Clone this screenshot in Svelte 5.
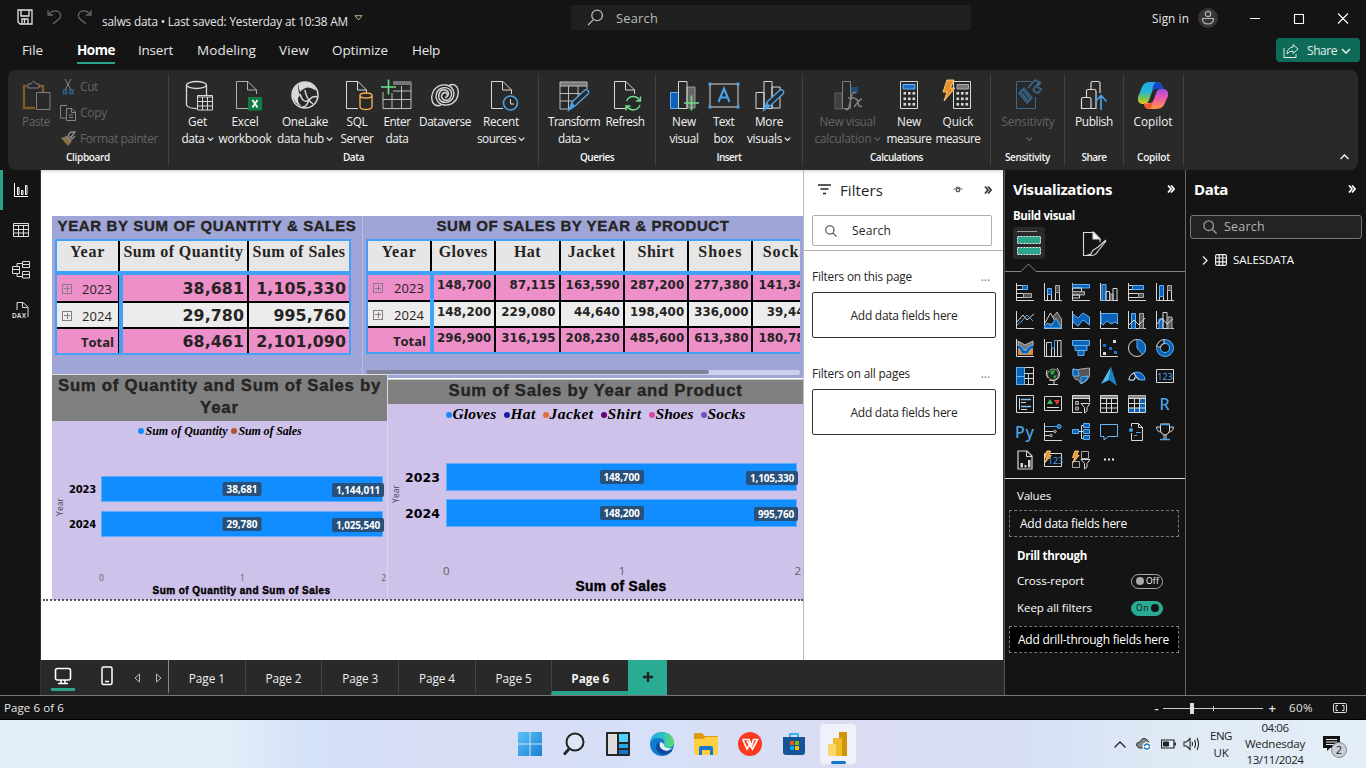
<script>
  function fit(node, w) {
    const n = node.textContent.length;
    const cur = node.getBoundingClientRect().width;
    if (w && n) node.style.letterSpacing = (w - cur) / n + 'px';
  }

  const W = '#d8d8d8', B = '#1a6fc4', L = '#4aa3e8', GR = '#6fe08a';
  const doc = (c = W) => `<path d="M16 28.500H4.500V1.500H16L24.500 10V14M15.500 1.500V10H24.500" stroke="${c}"/>`;
  const calc = (x) => `<path d="M${x} 1.500h17v27h-17z" stroke="${W}"/>` +
    [12, 17.500, 23].map((y) => [3, 7.500, 12].map((d) => `<path d="M${x + d} ${y}h2.600v2.600h-2.600z" fill="${W}"/>`).join('')).join('');
  const pencil = `<path d="M12 28L14 22L27 10Q29 9 30.500 11Q31 13 30 14L17 26L11 30Z" fill="#292929" stroke="${L}" stroke-width="1.400"/><path d="M14 22L17 26L10 31Z" fill="${L}"/>`;
  const bolt = (s = 1) => `<path d="M${5 * s} 0H${12 * s}L${8.500 * s} ${8 * s}H${13 * s}L${2 * s} ${21 * s}L${5 * s} ${12 * s}H${1 * s}Z" fill="#e8912d" stroke="#ffd27a" stroke-width=".9"/>`;
  const move = (x, s) => `<g transform="translate(${x} 0)">${s}</g>`;

  const big = {
    paste: `<g opacity=".5"><path d="M7 6H4V28H15M19 6H23V12" stroke="#d08a2c" stroke-width="2.400"/><path d="M8 8V4H11Q13.500 -1 16 4H19V8Z" stroke="${W}"/><path d="M16.500 12.500H30V29.500H16.500Z" stroke="${W}"/></g>`,
    get: move(1.500, `<ellipse cx="13" cy="5" rx="10" ry="3.500" stroke="${W}" stroke-width="1.300"/><path d="M3 5V25Q5 28.500 13 28.500M23 5V15" stroke="${W}" stroke-width="1.300"/><path d="M14 15.500h15v14.500h-15zM14 17h15M14 21.500h15M14 26h15M19 17v13M24 17v13" stroke="${W}" fill="#292929"/>`),
    excel: move(3, `${doc('#b0b0b0')}<path d="M16 17h14v13.500H16z" fill="#107c41"/><path d="M20.500 20L25.500 27.500M25.500 20L20.500 27.500" stroke="#fff" stroke-width="1.800"/>`),
    onelake: `<circle cx="16" cy="15" r="13" stroke="${W}" stroke-width="1.500"/><path d="M10 4Q3 8 3 16Q5 23 13 27Q6 20 11 15Q8 9 10 4Z" fill="${W}"/><path d="M10 4Q20 -2 27 9Q27 11 26 10Q18 4 11 12Q9 8 10 4Z" fill="${W}"/><path d="M11 14Q14 24 20 20Q24 15 29 17M16 10Q17 19 24 24M13 27Q17 28 20 20" stroke="${W}" stroke-width="1.500"/>`,
    sql: move(1, `${doc()}<path d="M18 15.500V27Q19 29.500 24 29.500T30 27V15.500" stroke="#f0a850" stroke-width="1.400" fill="#292929"/><ellipse cx="24" cy="15.500" rx="6" ry="2.500" stroke="#f0a850" stroke-width="1.400" fill="#292929"/>`),
    enter: `<path d="M2 12V28.500H30V2H12M2 19.500H30M11 13V28M20.500 6V28M12 11H30" stroke="#bdbdbd"/><path d="M12 2H30V5H12Z" fill="#777"/><path d="M0 7H15M7.500 -.5V14.500" stroke="${GR}" stroke-width="1.600"/>`,
    dataverse: `<g stroke="${W}" stroke-width="1.400"><path d="M20 5.500Q25 3 28 7Q31 13 27 20Q22 26 15 25Q8 24 7 17Q7 10 13 8Q19 6.500 22 11Q24 17 19 20Q14 21 12.500 17Q12.500 13 16 12.500Q19 13 18 16"/><path d="M12 25Q7 27 4 23Q1 17 5 10Q10 4 17 5Q24 6 25 13Q25 20 19 22Q13 23.500 10 19Q9 12 13 10Q18 9 19.500 13Q19.500 17 16 17.500"/></g>`,
    recent: move(2, `${doc()}<circle cx="23.500" cy="23" r="7" fill="#292929" stroke="${L}" stroke-width="1.600"/><path d="M23.500 19V24H27" stroke="${W}"/>`),
    transform: `<path d="M2 2h27v4H2z" fill="#777"/><path d="M29 9V2H2V29H12M2 6H29M2 13.500H25M2 21H15M10.500 6V29M20 6V18" stroke="#bdbdbd"/>${pencil}`,
    refresh: move(1, `${doc()}<path d="M16.500 21Q19 16 24 16.500Q28 17 30 21M30.500 16.500V21H26M30 25Q28 30 23 30Q19 29.500 16.500 26M16 30.500V26H20.500" stroke="${GR}" stroke-width="1.400"/>`),
    visual: `<path d="M2.500 12.500h8v16h-8z" fill="#0a63b8" stroke="#69b4f0"/><path d="M19 7h8v21h-8z" fill="#666" stroke="#999"/><path d="M10.500 1.500h8.500v27h-8.500z" stroke="${W}"/><path d="M16 23H31M23.500 15.500V30.500" stroke="${GR}" stroke-width="1.600"/>`,
    text: `<path d="M2 4H30V27H2Z" stroke="${W}"/><path d="M0.500 2.500h3v3h-3zM28.500 2.500h3v3h-3zM.5 25.500h3v3h-3zM28.500 25.500h3v3h-3z" fill="${L}"/><path d="M10.500 22L16 8.500L21.500 22M12.500 17.500H19.500" stroke="${L}" stroke-width="2"/>`,
    more: `<path d="M3 12.500h8v16h-8zM11 1.500h8v27h-8zM19 7h8v21h-8z" stroke="${W}"/>${pencil}`,
    fx: `<g opacity=".5"><path d="M3 13h7v16h-7z" fill="#555" stroke="#999"/><path d="M10.500 1.500h8v27h-8z" stroke="${W}"/><path d="M19 7h7v6h-7z" fill="#1a6fc4"/><path d="M24 13Q20 11 19.500 17L17 27Q16 31 13 29M16 18H23M23 19Q25 18 26 23Q27 28 30 26M30 19Q28 19 26 22L22 27" stroke="${W}" stroke-width="1.500"/></g>`,
    calc: `${calc(7.500)}<path d="M10 4.500h12v4.500h-12z" fill="#1a6fc4" stroke="#69b4f0"/>`,
    quick: `${calc(11.500)}<path d="M15 4.500h11.500v4.500H15z" fill="#777" stroke="#aaa"/>${bolt(1)}`,
    sens: `<g opacity=".5"><path d="M20 1.500H4.500V28.500H23.500V17" stroke="${L}"/><path d="M7 13L12 8L20 18L15 23ZM9 12L16 21M11 10L18 19" stroke="${L}" stroke-width="1.500"/><path d="M16 8L23 0L27 2L21 10M21 10Q26 16 29 9L25 7M26 6L29 2" stroke="${L}" stroke-width="1.800"/></g>`,
    publish: `<path d="M3.500 28.500V19Q3.500 17.500 5 17.500H11Q13 17.500 13 19V28.500ZM8.500 17V11Q8.500 9.500 10 9.500H16Q18 9.500 18 11V28.500H13M13 9V3Q13 1.500 15 1.500H20Q22 1.500 22 3V13" stroke="${W}" stroke-width="1.200"/><path d="M23 30V15.500M17.500 21.500L23 15.500L28.500 21.500" stroke="${L}" stroke-width="1.600"/>`,
    copilot: `<defs><linearGradient id="ca" x2="0" y2="1"><stop stop-color="#2aa7ee"/><stop offset=".45" stop-color="#27b6d6"/><stop offset=".75" stop-color="#7cc452"/><stop offset="1" stop-color="#f2c40c"/></linearGradient><linearGradient id="cb" x2="0" y2="1"><stop stop-color="#a34be6"/><stop offset=".5" stop-color="#ef5aa5"/><stop offset="1" stop-color="#ff9a3d"/></linearGradient></defs><path d="M13 2H21Q25 3 26 9H18Q16 9 15 12L12 20Q11 24 7 24H5Q0 23 1 17L5 7Q7 2 13 2Z" fill="url(#ca)"/><path d="M19 2H21Q25 3 26 9H17L15 12Q16 3 19 2Z" fill="#1747c9"/><path d="M18 29H11Q7 28 7 23H13Q16 23 17 19L20 11Q21 9 25 9H27Q32 10 31 16L27 25Q25 29 18 29Z" fill="url(#cb)"/><path d="M7 24H12Q15 24 16 20Q15 29 12 29Q8 29 7 24Z" fill="#f0592b"/>`
  };

  const groups = [
    { w: 370, label: 'Data', lw: 21, pad: 8, items: [
      { i: 'get', w: 41, l: [['Get', 19], ['data', 23, 1]] }, { i: 'excel', w: 54, l: [['Excel', 27], ['workbook', 53]] },
      { i: 'onelake', w: 66, l: [['OneLake', 46], ['data hub', 47, 1]] }, { i: 'sql', w: 38, l: [['SQL', 21], ['Server', 33]] },
      { i: 'enter', w: 42, l: [['Enter', 27], ['data', 23]] }, { i: 'dataverse', w: 54, l: [['Dataverse', 52]] },
      { i: 'recent', w: 58, l: [['Recent', 36], ['sources', 39, 1]] }] },
    { w: 117, label: 'Queries', lw: 34, pad: 7, items: [
      { i: 'transform', w: 56, l: [['Transform', 52], ['data', 23, 1]] }, { i: 'refresh', w: 46, l: [['Refresh', 39]] }] },
    { w: 147, label: 'Insert', lw: 25, pad: 8, items: [
      { i: 'visual', w: 40, l: [['New', 24], ['visual', 29]] }, { i: 'text', w: 39, l: [['Text', 21], ['box', 20]] },
      { i: 'more', w: 52, l: [['More', 28], ['visuals', 35, 1]] }] },
    { w: 188, label: 'Calculations', lw: 53, pad: 7, items: [
      { i: 'fx', w: 75, dim: 1, l: [['New visual', 56], ['calculation', 57, 1]] }, { i: 'calc', w: 48, l: [['New', 24], ['measure', 45]] },
      { i: 'quick', w: 50, l: [['Quick', 31], ['measure', 45]] }] },
    { w: 74, label: 'Sensitivity', lw: 45, pad: 7, items: [{ i: 'sens', w: 60, dim: 1, l: [['Sensitivity', 53], ['', 0, 1]] }] },
    { w: 59, label: 'Share', lw: 25, pad: 6, items: [{ i: 'publish', w: 46, l: [['Publish', 38]] }] },
    { w: 60, label: 'Copilot', lw: 33, pad: 6, items: [{ i: 'copilot', w: 46, l: [['Copilot', 39]] }] }
  ];

  const tabs = [['File', 21, 34], ['Home', 38, 23], ['Insert', 35, 24], ['Modeling', 59, 23], ['View', 30, 23], ['Optimize', 56, 24], ['Help', 28, 0]];

  const ax = `<path d="M.5 0V17.500H18" stroke="${W}"/>`;
  const F = `fill="#0a63b8" stroke="#5fb0f0"`, FG = `fill="#555" stroke="#aaa"`, N = `stroke="${W}"`;
  const sm = [
    ax + `<path d="M.5 2.500h6v4h-6zM.5 10.500h8v4h-8z" ${N}/><path d="M6.500 2.500h5v4h-5z" ${F}/><path d="M7.500 10.500h8v4h-8z" ${FG}/>`,
    ax + `<path d="M3.500 11.500h4v6h-4zM11.500 9.500h4v8h-4z" ${N}/><path d="M3.500 5.500h4v6h-4z" ${F}/><path d="M11.500 2.500h4v7h-4z" ${FG}/>`,
    ax + `<path d="M.5 1.500h17v3.500h-17z" ${F}/><path d="M.5 5h9v3.500h-9z" ${N}/><path d="M.5 8.500h12v3.500h-12z" ${FG}/><path d="M.5 12h7v3h-7z" ${N}/>`,
    ax + `<path d="M2 1.500h4v16h-4z" ${F}/><path d="M6 8.500h3.500v9H6z" ${N}/><path d="M10 11h3v6.500h-3z" ${FG}/><path d="M13 5.500h4v12h-4z" ${N}/>`,
    ax + `<path d="M.5 2.500h5v4h-5zM.5 10.500h10v4h-10z" ${N}/><path d="M4.500 2.500h11v4h-11z" ${F}/><path d="M10.500 10.500h5v4h-5z" ${FG}/>`,
    ax + `<path d="M3.500 13.500h4v4h-4zM11.500 7.500h4v10h-4z" ${N}/><path d="M3.500 2.500h4v11h-4z" ${F}/><path d="M11.500 2.500h4v5h-4z" ${FG}/>`,
    ax + `<path d="M1 11L7 4L11 9L18 3" ${N}/><path d="M1 14L6 10L11 4L17 10" stroke="${L}"/>`,
    ax + `<path d="M4 12L13 1L17.500 8V17H4Z" ${FG}/><path d="M1 12L6.500 2L12 12" fill="#141414" ${N}/><path d="M.5 14L4 12L7 15L12 7L17.500 17H.5Z" ${F}/>`,
    ax + `<path d="M1 3L6 7L11 2L17.500 6V14L11 9L6 15L1 11Z" ${F}/>`,
    ax + `<path d="M1 2.500H17.500V13L15 11L11 13L7 10L3 14L1 12Z" ${F}/>`,
    ax + `<path d="M3.500 2.500h4v15h-4z" ${F}/><path d="M11.500 2.500h4v15h-4z" ${FG}/><path d="M1 14L6 9L11 14L17 7" ${N}/>`,
    ax + `<path d="M3 8h4v9.500H3z" ${F}/><path d="M7 1.500h4v16H7z" ${N}/><path d="M12 6h4v11.500h-4z" ${FG}/><path d="M1 13L6 7L11 13L17 8" ${N}/>`,
    ax + `<path d="M2 10H17V16H2Z" fill="#e9862a"/><path d="M2 2L9 6L17 2V7L11 11L7 11L2 7Z" fill="#777" stroke="#bbb"/><path d="M2 8Q5 8 7 13H11Q13 8 17 8" stroke="#64b1ee" stroke-width="4"/><path d="M2 8Q5 8 7 13H11Q13 8 17 8" stroke="#0a63b8" stroke-width="2.500"/>`,
    ax + `<path d="M2.500 3.500h5V17M2.500 3.500V17M10.500 8V17M13.500 1.500h3.500V17M13.500 2V17" ${N}/><path d="M7.500 3.500V9h3V1.500h3" stroke="${L}"/>`,
    `<path d="M.5 1.500h17v5h-17z" ${F}/><path d="M3 6.500h12v5H3z" ${F}/><path d="M6 11.500h6v5H6z" ${F}/>`,
    ax + `<path d="M3 5h3v3H3zM9 8h3v3H9zM14 12h3v3h-3z" fill="#1a76d2"/><path d="M13 1h3v3h-3zM3 13h3v3H3z" fill="${W}"/>`,
    `<circle cx="9" cy="9" r="8.500" ${N}/><path d="M9 .5V9L14.500 15.500A8.500 8.500 0 0 0 9 .5Z" ${F}/>`,
    `<circle cx="9" cy="9" r="6.500" stroke="#64b1ee" stroke-width="5"/><circle cx="9" cy="9" r="6.500" stroke="#0a63b8" stroke-width="3.200"/><path d="M2 9A7 7 0 0 1 8 2" stroke="#141414" stroke-width="4"/><path d="M.5 8A8.500 8.500 0 0 1 8 .5V4.500A5 5 0 0 0 4.500 8Z" ${N}/>`,
    `<path d="M.5 .5h17v17H.5z" ${N}/><path d="M.5 .5h8v17h-8zM.5 9.500h8" ${F}/><path d="M8.500 6.500H17.500M12.500 6.500V17.500M8.500 11.500H17.500" ${N}/>`,
    `<circle cx="9" cy="7.500" r="5.500" fill="#1c2a20" stroke="#9a9a9a"/><path d="M6 4L11 3L10 7L7 8ZM9 9L13 8L11 12Z" fill="#2aa14b"/><path d="M13 1Q17 5 15 10Q12 15 5 13M10 14V17M4 17.500H14M3 3Q1 8 4 11" ${N}/>`,
    `<path d="M1 2Q6 4 9 2L17.500 1V9Q15 15 9 17Q7 12 3 12Q0 8 1 2Z" ${FG}/><path d="M1 2L6 3L7 9H1ZM9 10L16 9Q14 15 9 16Z" ${F}/>`,
    `<path d="M11 -.5L1 17L9 13Z" fill="#57b8e8"/><path d="M11 -.5L17 19L9 13Z" fill="#1783c4"/>`,
    `<path d="M1 13A8 8 0 0 1 17 13H12Q9 8 6 13Z" ${F}/><path d="M1 13A8 8 0 0 1 6 6L8 9Q6 10 6 13ZM6 7L11 13" fill="#141414" ${N}/>`,
    `<path d="M.5 2.500h17v13H.5z" ${N}/><text x="9" y="12.500" font-size="9" text-anchor="middle" font-family="Noto Sans" fill="${L}">123</text>`,
    `<path d="M.5 .5h17v17H.5z" ${N}/><path d="M5 4.500h10M5 11.500h10" stroke="#7cc0f5" stroke-width="1.500"/><path d="M3.500 3V14.500M5 7.500h5M5 14.500h6" ${N}/>`,
    `<path d="M.5 1.500h17v14H.5z" ${N}/><path d="M3 9L6 4L9 9Z" fill="#3fba55"/><path d="M10 5H16L13 10Z" fill="#e03a3a"/><path d="M3 12.500h12" ${N}/>`,
    `<path d="M.5 .5h17v3H.5z" fill="#888"/><path d="M10 17.500H.5V.5H17.500V7M.5 3.500h17" ${N}/><path d="M3.500 6.500h3v3h-3zM3.500 12h3v3h-3z" ${FG}/><path d="M9 8.500H18L15 12.500V16L12.500 18V12.500Z" fill="#141414" ${N}/>`,
    `<path d="M.5 .5h17v3H.5z" fill="#888"/><path d="M.5 .5h17v17H.5zM.5 3.500h17M.5 8.500h17M.5 13h17M6.500 4V17M11.500 4V17" ${N}/>`,
    `<path d="M.5 .5h17v17H.5z" fill="#0a63b8" ${N}/><path d="M1 4h10.500v8.500H1z" fill="#141414"/><path d="M.5 .5h17v3H.5z" fill="#888"/><path d="M.5 3.500h17M.5 8.500h17M.5 13h17M6.500 4V17M11.500 4V17" ${N}/>`,
    `<text x="3.500" y="15" font-size="16" font-family="Noto Sans" font-weight="500" fill="${L}">R</text>`,
    `<text x="-1" y="15" font-size="16" textLength="19" font-family="Noto Sans" font-weight="500" fill="${L}">Py</text>`,
    `<path d="M.5 0V17.500H18M1 8.500h9M1 12.500h6" ${N}/><path d="M1 3.500h12" stroke="${L}"/><circle cx="15" cy="3.500" r="2" ${F}/><circle cx="11" cy="8.500" r="1.300" ${FG}/><circle cx="7" cy="12.500" r="1.300" ${FG}/>`,
    `<path d="M7 8.500H12M9.500 2.500V15.500M9.500 2.500h3M9.500 15.500h3" ${N}/><path d="M.5 6.500h6v4h-6zM11.500 .5h6v4h-6zM11.500 6.500h6v4h-6zM11.500 12.500h6v4h-6z" ${F}/>`,
    `<path d="M.5 1.500H17.500V13.500H8L4 17V13.500H.5Z" stroke="#6ab7f3"/>`,
    `<path d="M3.500 4V.5H10.500L14.500 4.500V17.500H3.500V10M10.500 .5V4.500H14.500" ${N}/><circle cx="3" cy="7" r="2" fill="${L}"/><path d="M8 9.500h5M6 12.500h3" stroke="${L}"/>`,
    `<path d="M4.500 1H13.500V8Q12 12 9 12Q6 12 4.500 8ZM4.500 4H.5Q1 9 5 9M13.500 4H17.500Q17 9 13 9M8 12V16M10 12V16" ${N}/><path d="M4 16.500H14M4 1.500H14" stroke="${L}" stroke-width="1.500"/>`,
    `<path d="M2 0H11L16 5V18H2Z" stroke="${W}" stroke-width="1.200"/><path d="M10.500 0V5.500H16" ${N}/><path d="M4.500 12h2.500v4.500H4.500zM8.500 14h2v2.500h-2zM12 9h2.500v7.500H12z" fill="${W}"/>`,
    `<path d="M.5 2.500h17v13H.5z" ${N}/><text x="11.500" y="13" font-size="9" text-anchor="middle" font-family="Noto Sans" fill="${L}">123</text>${bolt(0.550)}`,
    `<path d="M9.500 .5h7v7h-7zM.5 10.500h7v6H.5z" stroke="#aaa"/><path d="M9 8.500H18L15 12.500V16L12.500 18V12.500Z" fill="#141414" ${N}/>${bolt(0.550)}`,
    `<path d="M4 7.500h2v2H4zM8 7.500h2v2H8zM12 7.500h2v2h-2z" fill="#eee"/>`
  ];

  const t1 = [['2023', '38,681', '1,105,330'], ['2024', '29,780', '995,760'], ['Total', '68,461', '2,101,090']];
  const t2h = [['Gloves', 49], ['Hat', 27], ['Jacket', 48], ['Shirt', 37], ['Shoes', 44], ['Socks', 44]];
  const t2 = [
    ['2023', '148,700', '87,115', '163,590', '287,200', '277,380', '141,340'],
    ['2024', '148,200', '229,080', '44,640', '198,400', '336,000', '39,440'],
    ['Total', '296,900', '316,195', '208,230', '485,600', '613,380', '180,780']];
  const numW = (s) => (s.length - 1) * 8.300 + 4.500;
  const numW1 = (s) => s.replace(/,/g, '').length * 11.100 + (s.split(',').length - 1) * 6;
  const legend = [['Gloves', 44, '#118dff'], ['Hat', 25, '#12239e'], ['Jacket', 44, '#e66c37'], ['Shirt', 34, '#6b007b'], ['Shoes', 38, '#e044a7'], ['Socks', 38, '#744ec2']];
  const pages = [1, 2, 3, 4, 5, 6];
</script>

{#snippet t(text, w)}<span class="t" use:fit={w}>{text}</span>{/snippet}
{#snippet chev(s = 7)}<svg class="chev" width={s} height={s * 0.6} viewBox="0 0 10 6" fill="none" stroke="currentColor" stroke-width="1.6"><path d="M1 1L5 5L9 1" /></svg>{/snippet}
{#snippet dbl()}<svg width="8" height="8" viewBox="0 0 8 8" fill="none" stroke="currentColor" stroke-width="1.7"><path d="M1 .5L4 4L1 7.500M4 .5L7 4L4 7.500" /></svg>{/snippet}
{#snippet lens(s, c)}<svg width={s} height={s} viewBox="0 0 16 16" fill="none" stroke={c} stroke-width="1.2"><circle cx="9.500" cy="6" r="5" /><path d="M6 10L1 15" /></svg>{/snippet}
{#snippet lensL(s, c)}<svg width={s} height={s} viewBox="0 0 16 16" fill="none" stroke={c} stroke-width="1.5"><circle cx="6.500" cy="6.500" r="5.500" /><path d="M10.500 10.500L15.500 15.500" /></svg>{/snippet}

<div class="app">
  <header class="title">
    <svg class="save" width="16" height="16" viewBox="0 0 16 16" fill="none" stroke="#e4e4e4" stroke-width="1.3"><path d="M1 1H15V15H3L1 13ZM4 1V7H12V1M5 15V10H11V15M7.500 10V14" /></svg>
    <svg class="undo" width="15" height="16" viewBox="0 0 15 16" fill="none" stroke="#666" stroke-width="1.3"><path d="M1 1V6H6M1 6Q5 1 10 2Q15 4 13 9L6 15" /></svg>
    <svg class="redo" width="15" height="16" viewBox="0 0 15 16" fill="none" stroke="#666" stroke-width="1.3"><path d="M14 1V6H9M14 6Q10 1 5 2Q0 4 2 9L9 15" /></svg>
    <div class="fname">{@render t('salws data • Last saved: Yesterday at 10:38 AM', 246)}</div>
    <svg class="tri" width="9" height="6" viewBox="0 0 9 6" fill="none" stroke="#c9ad8e"><path d="M1 .7H8L4.500 5Z" /></svg>
    <div class="search">{@render lens(17, '#bbb')}{@render t('Search', 42)}</div>
    <div class="sign">{@render t('Sign in', 37)}</div>
    <svg class="user" width="20" height="20" viewBox="0 0 20 20" fill="none" stroke="#b5b5b5" stroke-width="1.2"><circle cx="10" cy="10" r="10" fill="#363636" stroke="none" /><circle cx="10" cy="6" r="2.700" /><path d="M4.500 10.500H15.500Q15.500 16 10 16T4.500 10.500Z" /></svg>
    <svg class="win" width="102" height="14" viewBox="0 0 102 14" fill="none" stroke="#fff" stroke-width="1.1"><path d="M0 7.500H10M44.500 3.500H53.500V12.500H44.500ZM88 2.500L98 12.500M98 2.500L88 12.500" /></svg>
  </header>

  <nav class="menu">
    {#each tabs as [n, w, g]}<div class="tab" class:on={n === 'Home'} style:margin-right="{g}px">{@render t(n, w)}</div>{/each}
    <div class="share"><svg width="16" height="16" viewBox="0 0 16 16" fill="none" stroke="#e0eeea"><path d="M1 5V14.500H13V11M10 1.500L15 6L10 10.500V8Q6 8 4 11Q4 5 10 4Z" /></svg>{@render t('Share', 30)}{@render chev(10)}</div>
  </nav>

  <section class="ribbon">
    <div class="group clip">
      <div class="items">
        <div class="item dim paste"><svg width="32" height="32" viewBox="0 0 32 32" fill="none">{@html big.paste}</svg><div class="ln">{@render t('Paste', 28)}</div></div>
        <div class="small">
          <div><svg width="16" height="16" viewBox="0 0 16 16" fill="none" stroke="#888"><path d="M5 0L11 11M11 0L5 11" /><path d="M3.500 11h3v3.500h-3zM10 11h3v3.500h-3z" stroke="#2f6290" stroke-width="1.500" /></svg>{@render t('Cut', 18)}</div>
          <div><svg width="16" height="16" viewBox="0 0 16 16" fill="none" stroke="#858585"><path d="M6 13H.5V.5H7M6.500 3.500H12L15.500 7V15.500H6.500ZM11.500 4V7.500H15M9 10h4M9 12.500h4" /></svg>{@render t('Copy', 27)}</div>
          <div><svg width="16" height="16" viewBox="0 0 16 16" fill="none"><path d="M1 7L7 5L12 10L8 15Z" fill="#8a7048" /><path d="M6 5L11 10M8 4L12 8L15 5M8 4L11 1H15L11 6" stroke="#8a8a8a" stroke-width="1.400" /></svg>{@render t('Format painter', 78)}</div>
        </div>
      </div>
      <div class="glabel">{@render t('Clipboard', 44)}</div>
    </div>
    {#each groups as g}
      <div class="group" style:width="{g.w}px">
        <div class="items" style:padding-left="{g.pad}px">
          {#each g.items as it}
            <div class="item" class:dim={it.dim} style:width="{it.w}px">
              <svg width="32" height="32" viewBox="0 0 32 32" fill="none" overflow="visible">{@html big[it.i]}</svg>
              {#each it.l as [s, w, c]}<div class="ln">{@render t(s, w)}{#if c}{@render chev(7)}{/if}</div>{/each}
            </div>
          {/each}
        </div>
        <div class="glabel">{@render t(g.label, g.lw)}</div>
      </div>
    {/each}
    <svg class="fold" width="9" height="6" viewBox="0 0 9 6" fill="none" stroke="#eee" stroke-width="1.5"><path d="M.5 5L4.500 1L8.500 5" /></svg>
  </section>

  <div class="main">
    <aside class="rail">
      <div class="rc on"><svg width="16" height="16" viewBox="0 0 16 16" fill="none" stroke="#fff"><path d="M1.500 1V14.500H15M4.500 5.500h1.500v7h-1.500zM8.500 8.500h1.500v4h-1.500zM12.500 3.500h1.500v9h-1.500z" /></svg></div>
      <div class="rc"><svg width="16" height="16" viewBox="0 0 16 16" fill="none" stroke="#ddd"><path d="M.5 1.500h15v13H.5zM.5 3.500h15M.5 7.500h15M.5 11h15M5.500 3V14M10.500 3V14" /></svg></div>
      <div class="rc"><svg width="18" height="18" viewBox="0 0 18 18" fill="none" stroke="#ddd"><path d="M.5 5.500h7v7h-7zM10.500 .5h7v6h-7zM10.500 10.500h7v6.500h-7zM.5 8.500h7M10.500 3.500h7M10.500 13.500h7M5 5V2.500H10.500M5 13V15.500H10.500" /></svg></div>
      <div class="rc"><svg width="18" height="18" viewBox="0 0 18 18" fill="none" stroke="#ddd"><path d="M5 9V1.500H11L16 6V16M10.500 2V6.500H15" /><text x="0" y="16.500" font-size="6.500" textLength="14" font-family="Liberation Sans" font-weight="700" fill="#ddd" stroke="none">DAX</text></svg></div>
    </aside>

    <div class="center">
      <div class="work">
        <div class="canvas">
          <div class="vis v1">
            <div class="vt">{@render t('YEAR BY SUM OF QUANTITY & SALES', 299)}</div>
            <div class="tbl a">
              <div class="hd">{@render t('Year', 35)}</div><div class="hd">{@render t('Sum of Quantity', 120)}</div><div class="hd">{@render t('Sum of Sales', 93)}</div>
              {#each t1 as r, i}
                <div class="yr p{i}">{#if i < 2}<i class="plus"></i>{/if}{@render t(r[0], i < 2 ? 30 : 33)}</div>
                <div class="nm p{i}">{@render t(r[1], numW1(r[1]))}</div><div class="nm p{i}">{@render t(r[2], numW1(r[2]))}</div>
              {/each}
              <b class="f fh"></b><b class="f fy"></b><b class="f fb"></b>
            </div>
          </div>
          <div class="vis v2">
            <div class="vt">{@render t('SUM OF SALES BY YEAR & PRODUCT', 293)}</div>
            <div class="clipx"><div class="tbl b">
              <div class="hd">{@render t('Year', 35)}</div>{#each t2h as [h, w]}<div class="hd">{@render t(h, w)}</div>{/each}
              {#each t2 as r, i}
                <div class="yr p{i}">{#if i < 2}<i class="plus"></i>{/if}{@render t(r[0], i < 2 ? 30 : 33)}</div>
                {#each r.slice(1) as n}<div class="nm p{i}">{@render t(n, numW(n))}</div>{/each}
              {/each}
              <b class="f fh"></b><b class="f fy"></b><b class="f fb"></b>
            </div></div>
            <div class="scroll"><div></div></div>
          </div>
          <div class="vis v3">
            <div class="ct">{@render t('Sum of Quantity and Sum of Sales by', 323)}<br />{@render t('Year', 39)}</div>
            <div class="lg"><i style:background="#118dff"></i>{@render t('Sum of Quantity', 82)}<i class="sp" style:background="#b0532f"></i>{@render t('Sum of Sales', 63)}</div>
            <div class="plot">
              <div class="yt">Year</div>
              <div class="row"><span class="yl">{@render t('2023', 27)}</span><div class="bar"><em>{@render t('38,681', 31)}</em><em class="r">{@render t('1,144,011', 44)}</em></div></div>
              <div class="row"><span class="yl">{@render t('2024', 27)}</span><div class="bar"><em>{@render t('29,780', 31)}</em><em class="r">{@render t('1,025,540', 44)}</em></div></div>
            </div>
            <div class="axis"><span>0</span><span>1</span><span>2</span></div>
            <div class="at">{@render t('Sum of Quantity and Sum of Sales', 178)}</div>
          </div>
          <div class="vis v4">
            <div class="ct">{@render t('Sum of Sales by Year and Product', 294)}</div>
            <div class="lg">{#each legend as [n, w, c]}<i style:background={c}></i>{@render t(n, w)}{/each}</div>
            <div class="plot">
              <div class="yt">Year</div>
              <div class="row"><span class="yl">{@render t('2023', 35)}</span><div class="bar"><em>{@render t('148,700', 36)}</em><em class="r">{@render t('1,105,330', 44)}</em></div></div>
              <div class="row"><span class="yl">{@render t('2024', 35)}</span><div class="bar"><em>{@render t('148,200', 36)}</em><em class="r">{@render t('995,760', 36)}</em></div></div>
            </div>
            <div class="axis"><span>0</span><span>1</span><span>2</span></div>
            <div class="at">{@render t('Sum of Sales', 91)}</div>
          </div>
          <div class="dots"></div>
        </div>

        <div class="filters">
          <div class="fhead">
            <svg width="13" height="11" viewBox="0 0 13 11" stroke="#252423" stroke-width="1.3"><path d="M0 1H13M2.500 5H10.500M5 9.500H8" /></svg>
            {@render t('Filters', 43)}
            <svg class="eye" width="10" height="7" viewBox="0 0 10 7" fill="none" stroke="#555"><path d="M.5 4Q5 -2 9.500 4" /><circle cx="5" cy="4" r="1.700" stroke-width="1.300" /></svg>
            {@render dbl()}
          </div>
          <div class="fs">{@render lensL(12, '#444')}{@render t('Search', 39)}</div>
          <div class="fl">{@render t('Filters on this page', 100)}<span class="el">...</span></div>
          <div class="fbx">{@render t('Add data fields here', 107)}</div>
          <div class="fl two">{@render t('Filters on all pages', 98)}<span class="el">...</span></div>
          <div class="fbx">{@render t('Add data fields here', 107)}</div>
        </div>
      </div>

      <div class="pages">
        <div class="pi"><svg width="18" height="18" viewBox="0 0 18 18" fill="none" stroke="#fff" stroke-width="1.6"><rect x="1.500" y="1.500" width="15" height="11.500" rx="2" /><path d="M7 13V16M11 13V16M4 16.500H14" /></svg></div>
        <svg class="ph" width="12" height="20" viewBox="0 0 12 20" fill="none" stroke="#fff" stroke-width="1.5"><rect x="1" y="1" width="10" height="17.500" rx="1.500" /><path d="M4 15.500h4" /></svg>
        <svg class="ar" width="28" height="10" viewBox="0 0 28 10" fill="none" stroke="#bbb"><path d="M5.500 1V9L1 5ZM22.500 1V9L27 5Z" /></svg>
        {#each pages as p}<div class="pg" class:on={p === 6}>{@render t('Page ' + p, p === 6 ? 38 : 36)}</div>{/each}
        <div class="add"><svg width="10" height="10" viewBox="0 0 10 10" stroke="#222" stroke-width="2.4"><path d="M5 0V10M0 5H10" /></svg></div>
      </div>
    </div>

    <div class="viz">
      <div class="phd">{@render t('Visualizations', 99)}{@render dbl()}</div>
      <div class="bv">{@render t('Build visual', 62)}</div>
      <div class="modes">
        <div class="m1"><svg width="24" height="26" viewBox="0 0 24 26"><path d="M0 .5H20" stroke="#999" /><g fill="#2aa58c" stroke="#eee" stroke-dasharray="2 1"><path d="M.5 5.500h23v7H.5zM.5 16.500h23v7H.5z" /></g></svg></div>
        <svg class="m2" width="26" height="26" viewBox="0 0 26 26" fill="none" stroke="#d8d8d8" stroke-width="1.100"><path d="M8 24.500H2.500V1.500H13L19 8V11" /><path d="M12 1V8H19Z" fill="#fff" /><path d="M25 9L17 16L14 18Q11 19 10 23L7 24Q14 26 17 20L25 10" /></svg>
      </div>
      <svg class="notch" width="180" height="9" viewBox="0 0 180 9" fill="none" stroke="#858585"><path d="M0 8.500H16L23.500 1L31 8.500H180" /></svg>
      <div class="grid">{#each sm as s}<svg width="18" height="18" viewBox="0 0 18 18" fill="none" overflow="visible">{@html s}</svg>{/each}</div>
      <div class="val">{@render t('Values', 34)}</div>
      <div class="drop">{@render t('Add data fields here', 107)}</div>
      <div class="dt">{@render t('Drill through', 70)}</div>
      <div class="tg">{@render t('Cross-report', 67)}<span class="sw"><u></u>{@render t('Off', 13)}</span></div>
      <div class="tg k">{@render t('Keep all filters', 75)}<span class="sw on">{@render t('On', 13)}<u></u></span></div>
      <div class="drop dk">{@render t('Add drill-through fields here', 151)}</div>
    </div>

    <div class="data">
      <div class="phd">{@render t('Data', 34)}{@render dbl()}</div>
      <div class="ds">{@render lensL(14, '#999')}{@render t('Search', 41)}</div>
      <div class="sd"><svg width="6" height="9" viewBox="0 0 6 9" fill="none" stroke="#eee" stroke-width="1.3"><path d="M1 .5L5 4.500L1 8.500" /></svg><svg width="12" height="12" viewBox="0 0 12 12" fill="none" stroke="#eee" stroke-width="1.200"><rect x=".6" y=".6" width="10.800" height="10.800" rx="1.500" /><path d="M4.200 1V11M7.800 1V11M1 4H11M1 7.800H11" /></svg>{@render t('SALESDATA', 61)}</div>
    </div>
  </div>

  <div class="status">
    {@render t('Page 6 of 6', 60)}
    <div class="zoom"><b>-</b><div class="sl"><i></i><s></s></div><b>+</b>{@render t('60%', 24)}<svg width="14" height="10" viewBox="0 0 14 10" fill="none" stroke="#ddd"><rect x=".5" y=".5" width="13" height="9" rx="1" /><path d="M5 2.500H3V7.500H5M9 2.500H11V7.500H9" /></svg></div>
  </div>

  <footer class="task">
    <div class="apps">
      <svg width="24" height="24" viewBox="0 0 24 24"><defs><linearGradient id="wg" x2="1" y2="1"><stop stop-color="#5cc3f5" /><stop offset="1" stop-color="#1a7fd6" /></linearGradient></defs><path d="M0 0H11.500V11.500H0ZM12.500 0H24V11.500H12.500ZM0 12.500H11.500V24H0ZM12.500 12.500H24V24H12.500Z" fill="url(#wg)" /></svg>
      <svg width="24" height="24" viewBox="0 0 24 24" fill="none" stroke="#222" stroke-width="2"><circle cx="13" cy="10" r="8.500" fill="#dfe5f7" /><path d="M7 17L2 22.500" stroke-width="2.800" /></svg>
      <svg width="24" height="24" viewBox="0 0 24 24"><rect width="24" height="24" rx="1" fill="#262626" /><path d="M2 2h9v20H2z" fill="#ddd" /><path d="M13 2h9v8h-9z" fill="#4fd1fa" /><path d="M13 12h9v4h-9z" fill="#29a6e6" /><path d="M13 18h9v4h-9z" fill="#1377cf" /></svg>
      <svg width="24" height="24" viewBox="0 0 24 24"><defs><linearGradient id="eg"><stop stop-color="#25a3e6" /><stop offset=".5" stop-color="#2cc0cd" /><stop offset="1" stop-color="#64df5e" /></linearGradient></defs><circle cx="12" cy="12" r="12" fill="#1378cf" /><path d="M0 12Q1 0 12 0Q23 1 24 10Q24 16 17 16Q13 16 14 13Q16 6 8 6Q2 6 0 12Z" fill="url(#eg)" /><path d="M9 10Q3 14 8 20Q13 25 21 20Q23 18 21 18Q10 20 9 10Z" fill="#0c499b" /><path d="M10 10Q8 18 17 19Q20 18 22 16Q16 17 14 14Q15 11 10 10Z" fill="#e5edfa" /></svg>
      <svg width="26" height="24" viewBox="0 0 26 24"><path d="M1 2Q1 1 2 1H9L12 4H24Q25 4 25 5V12H1Z" fill="#dd9a13" /><path d="M1 7H10L13 5H25V22Q25 23 24 23H2Q1 23 1 22Z" fill="#ffcf43" /><path d="M6 23V16Q6 14 8 14H18Q20 14 20 16V23H17V18H9V23Z" fill="#1679cf" /></svg>
      <svg width="24" height="24" viewBox="0 0 24 24"><circle cx="12" cy="12" r="12" fill="#fb3a20" /><path d="M4.500 7.500H11L13.500 14L15.500 7.500H19.500L14.500 17L9 9M5 8L9 17L12 12" stroke="#fff" stroke-width="1.700" fill="none" /></svg>
      <svg width="24" height="24" viewBox="0 0 24 24"><path d="M8 7V2H16V7" stroke="#31b9ee" stroke-width="2" fill="none" /><path d="M1 5H23V20Q23 23 20 23H4Q1 23 1 20Z" fill="#155596" /><path d="M8 9h4v4H8z" fill="#f35325" /><path d="M13 9h4v4h-4z" fill="#81bc06" /><path d="M8 14h4v4H8z" fill="#05a6f0" /><path d="M13 14h4v4h-4z" fill="#ffba08" /></svg>
      <div class="pbi"><svg width="20" height="24" viewBox="0 0 20 24"><path d="M11 0H18Q19 0 19 1V24H11Z" fill="#cf9209" /><path d="M5 6H13Q14 6 14 7V24H5Z" fill="#eebd2c" /><path d="M1 12H7Q8 12 8 13V24H2Q0 24 0 22V13Z" fill="#f8d768" /></svg></div>
    </div>
    <div class="tray">
      <svg width="12" height="7" viewBox="0 0 12 7" fill="none" stroke="#222" stroke-width="1.300"><path d="M.5 6.500L6 1L11.500 6.500" /></svg>
      <svg width="16" height="14" viewBox="0 0 16 14"><path d="M3 11Q-1 9 1 6Q3 5 4 5Q6 0 10 2Q13 4 13 6L9 11Z" fill="#888" stroke="#333" /><circle cx="11" cy="9.500" r="4.500" fill="#fff" /><path d="M8 9Q11 5 14 9M14 10Q11 14 8 10.500" stroke="#1a78c8" stroke-width="1.500" fill="none" /></svg>
      <svg width="15" height="10" viewBox="0 0 15 10" fill="none" stroke="#222"><path d="M.5 1h12.500v8H.5zM14.300 3.500v3" stroke-width="1.200" /><path d="M2.500 3h5v4h-5z" fill="#222" /></svg>
      <svg width="17" height="14" viewBox="0 0 17 14" fill="none" stroke="#222" stroke-width="1.100"><path d="M1 5H3.500L7 1.500V12.500L3.500 9H1ZM9 5Q10 7 9 9M11.500 3Q13.500 7 11.500 11M14 1Q17 7 14 13" /></svg>
      <div class="lang">{@render t('ENG', 22)}<br />{@render t('UK', 15)}</div>
      <div class="clock">{@render t('04:06', 27)}<br />{@render t('Wednesday', 60)}<br />{@render t('13/11/2024', 57)}</div>
      <div class="note"><svg width="17" height="15" viewBox="0 0 17 15"><path d="M0 0H17V12H7L4 15V12H0Z" fill="#111" /><path d="M3 3.500H14M3 6H14M3 8.500H11" stroke="#e5eaf5" stroke-width="1.100" /></svg><span>2</span></div>
    </div>
  </footer>
</div>

<style>
  :global(body) { margin: 0; overflow: hidden; }
  .app { width: 1366px; height: 768px; background: #141414; color: #e6e6e6; font: 12px/16px "Open Sans", "Noto Sans", sans-serif; display: flex; flex-direction: column; overflow: hidden; }
  .app :global(*) { box-sizing: border-box; }
  svg { flex: none; display: block; }
  .t { display: inline-block; white-space: pre; }
  .title { height: 35px; display: flex; align-items: center; padding-left: 17px; flex: none; }
  .save { margin-top: -1px; }
  .undo { margin-left: 14px; margin-top: -1px; }
  .redo { margin-left: 15px; margin-top: -1px; }
  .fname { margin: 6px 0 0 10px; width: 246px; font-size: 11.8px; display: flex; }
  .tri { margin-left: 6px; }
  .search { width: 400px; height: 25px; margin-left: 208px; background: #1f1f1f; display: flex; align-items: center; gap: 12px; padding-left: 16px; font-size: 12.8px; color: #bdbdbd; border-radius: 2px; }
  .sign { margin-left: 181px; width: 37px; display: flex; font-size: 11.8px; }
  .user { margin-left: 9px; }
  .win { margin-left: 32px; }
  .menu { height: 35px; flex: none; display: flex; padding-left: 22px; font-size: 13.5px; position: relative; }
  .tab { height: 29px; padding-top: 7px; display: flex; border-bottom: 2px solid transparent; }
  .tab.on { font-weight: 700; color: #fff; border-color: #2aa58c; }
  .share { margin: 3px 6px 0 auto; width: 84px; height: 24px; background: #0f6b58; border-radius: 4px; display: flex; align-items: center; gap: 8px; padding: 1px 0 0 7px; color: #e0eeea; font-size: 12px; }
  .share .chev { margin-left: -4px; }
  .ribbon { margin-left: 8px; width: 1350px; height: 100px; flex: none; background: #292929; border-radius: 8px; display: flex; padding: 4px 0; }
  .group { height: 92px; border-right: 1px solid #404040; display: flex; flex-direction: column; flex: none; }
  .clip { width: 161px; }
  .items { display: flex; height: 75px; padding-top: 6px; }
  .item { display: flex; flex-direction: column; align-items: center; font-size: 11.8px; color: #f2f2f2; flex: none; }
  .item > svg { margin-bottom: 1px; }
  .item.dim, .small { color: #646464; }
  .ln { height: 16.500px; display: flex; align-items: center; }
  .ln .chev { margin: 2px 0 0 2px; }
  .paste { width: 56px; }
  .small { display: flex; flex-direction: column; gap: 10px; margin: -1px 0 0 -4px; }
  .small div { display: flex; height: 16px; gap: 4px; align-items: center; }
  .glabel { text-align: center; font-size: 10px; font-weight: 600; color: #f5f5f5; line-height: 16px; }
  .fold { margin: 80px 9px 0 auto; }
  .main { height: 525px; display: flex; flex: none; }
  .rail { width: 41px; border-right: 1px solid #333; display: flex; flex-direction: column; flex: none; }
  .rc { height: 40px; border-left: 3px solid transparent; display: flex; align-items: center; justify-content: center; padding-right: 1px; }
  .rc.on { border-color: #2aa58c; }
  .center { width: 963px; display: flex; flex-direction: column; flex: none; }
  .work { height: 490px; display: flex; background: #fff; }
  .canvas { width: 762px; position: relative; overflow: hidden; background: linear-gradient(#ddd, #fff 4px); color: #252423; flex: none; }
  .vis { position: absolute; overflow: hidden; }
  .v1 { left: 11px; top: 46px; width: 311px; height: 158px; background: #a0a5d8; border-right: 1px solid #b9bce2; }
  .v2 { left: 322px; top: 46px; width: 440px; height: 162px; background: #a0a5d8; }
  .v3 { left: 11px; top: 204px; width: 336px; height: 226px; background: #cec2ea; border-right: 1px solid #ddd5f0; }
  .v4 { left: 347px; top: 209px; width: 415px; height: 221px; background: #cec2ea; }
  .vt { height: 23px; padding-top: 2px; text-align: center; font: 700 15px/16px "Liberation Sans", sans-serif; -webkit-text-stroke: .35px; }
  .tbl { position: relative; display: grid; row-gap: 2px; background: #000; }
  .a { margin-left: 5px; width: 292px; height: 115px; grid-template-columns: 61px 127px 100px; column-gap: 2px; grid-template-rows: 34px 26px 24px 25px; }
  .clipx { overflow: hidden; width: 434px; margin-left: 3px; height: 118px; }
  .b { margin-left: 2px; margin-top: 2px; width: 450px; height: 112px; grid-template-columns: 62px repeat(6, 62.300px); column-gap: 2px; grid-template-rows: 32px 25px 24px 25px; }
  .hd { background: #e6e6e6; font: 700 16px/21px "Liberation Serif", serif; text-align: center; }
  .a .hd { line-height: 25px; }
  .yr, .nm { background: #ed8fc9; display: flex; align-items: center; justify-content: flex-end; padding-right: 3px; }
  .yr { font-size: 13px; padding-right: 6px; padding-top: 1px; }
  .p1 { background: #ececec; }
  .yr.p2 { font-weight: 700; padding-right: 4px; }
  .nm { font: 700 15.800px/20px "DejaVu Sans", sans-serif; padding-top: 1px; }
  .b .nm { font-size: 11.800px; align-items: flex-start; line-height: 21px; padding-top: 0; }
  .plus { width: 10px; height: 10px; border: 1px solid #8a7a85; margin-right: auto; margin-left: 5px; background: linear-gradient(#8a7a85, #8a7a85) center/6px 1px no-repeat, linear-gradient(#8a7a85, #8a7a85) center/1px 6px no-repeat; }
  .f { position: absolute; border: 2px solid #41a1f7; }
  .fh { left: -2px; top: 0; right: -2px; height: 34px; }
  .fy { left: -2px; top: 34px; width: 66px; bottom: -1px; }
  .fb { left: 64px; top: 34px; right: -2px; bottom: -1px; }
  .b .fh { top: -2px; }
  .b .fy, .b .fb { top: 32px; }
  .scroll { margin: 13px 0 0 3px; width: 434px; height: 5px; background: #cdd0ee; border-radius: 3px; }
  .scroll div { width: 343px; height: 4px; background: #808299; border-radius: 3px; }
  .ct { background: #808080; text-align: center; font: 700 16.800px/22px "Liberation Sans", sans-serif; -webkit-text-stroke: .35px; }
  .v3 .ct { height: 47px; border-top: 1px solid #ddd; line-height: 21.500px; }
  .v4 .ct { height: 25px; border-top: 1px solid #ccc; line-height: 21px; }
  .lg { display: flex; align-items: center; justify-content: center; font: italic 700 12px/16px "Liberation Serif", serif; color: #000; }
  .lg i { width: 6px; height: 6px; border-radius: 50%; margin-right: 2px; }
  .v3 .lg { height: 19px; }
  .lg .sp { margin-left: 3px; }
  .v4 .lg { height: 20px; font-size: 15.500px; }
  .v4 .lg i { margin-right: 1px; margin-top: 2px; }
  .v4 .lg i:not(:first-child) { margin-left: 7px; }
  .plot { position: relative; display: flex; flex-direction: column; gap: 9px; }
  .v3 .plot { margin-top: 36px; gap: 9px; }
  .v4 .plot { margin-top: 39px; gap: 8px; }
  .yt { position: absolute; left: -7px; top: 24px; width: 30px; height: 14px; font-size: 8.500px; line-height: 14px; text-align: center; transform: rotate(-90deg); color: #444; }
  .row { height: 26px; display: flex; align-items: center; padding-left: 17px; color: #000; }
  .v4 .row { height: 28px; }
  .yl { width: 32px; font: 700 10px/14px "DejaVu Sans", sans-serif; padding-top: 1px; }
  .v4 .yl { width: 41px; font-size: 12.500px; }
  .bar { width: 282px; height: 100%; background: #118dff; border: 1px solid #5caef8; display: flex; align-items: center; position: relative; }
  .v4 .bar { width: 351px; }
  em { position: absolute; left: 50%; transform: translateX(-50%); background: #27507a; color: #fff; font: 700 10px/14px "Open Sans", sans-serif; padding: 0 4px; border-radius: 2px; height: 14px; }
  .r { left: auto; right: -2px; transform: none; top: 6px; }
  .v4 .r { top: 7px; }
  .axis { display: flex; justify-content: space-between; color: #605e5c; }
  .v3 .axis { margin: 34px 1px 0 47px; font-size: 8.500px; line-height: 14px; }
  .v4 .axis { margin: 36px 2px 0 55px; font-size: 11.500px; line-height: 16px; }
  .at { font: 700 10px/12px "Liberation Sans", sans-serif; text-align: center; color: #000; -webkit-text-stroke: .4px; }
  .v3 .at { padding-left: 44px; }
  .v4 .at { padding-left: 51px; font-size: 13.800px; line-height: 15px; }
  .dots { position: absolute; left: 2px; right: 0; top: 429px; border-top: 2px dotted #555; }
  .filters { width: 201px; border-left: 1px solid #bbb; border-right: 1px solid #333; background: linear-gradient(#ddd, #fff 4px); color: #252423; font-size: 12px; }
  .fhead { height: 40px; display: flex; align-items: center; padding: 0 11px 1px 14px; font-size: 15px; font-weight: 500; gap: 9px; color: #252423; }
  .fhead :global(svg) { color: #333; }
  .eye { margin-left: auto; margin-right: 12px; }
  .fs { margin: 5px 0 0 8px; width: 180px; height: 31px; border: 1px solid #b0aeac; border-radius: 2px; display: flex; align-items: center; padding-left: 12px; gap: 15px; }
  .fl { border-top: 1px solid #b5b0ac; margin-top: 4px; height: 42px; display: flex; justify-content: space-between; padding: 17px 13px 0 8px; font-size: 11.800px; }
  .fl.two { border: 0; margin-top: 0; height: 51px; padding-top: 27px; }
  .el { color: #777; line-height: 16px; }
  .fbx { margin-left: 8px; width: 184px; height: 46px; border: 1px solid #333; border-radius: 2px; display: flex; align-items: center; justify-content: center; padding-top: 2px; }
  .pages { height: 35px; background: #292929; display: flex; font-size: 11.800px; color: #f0f0f0; }
  .pi { width: 24px; margin-left: 10px; height: 31px; border-bottom: 3px solid #2aa58c; padding: 7px 3px 0; border-radius: 1px; }
  .ph { margin: 6px 0 0 26px; }
  .ar { margin: 13px 0 0 21px; }
  .pg { width: 76.700px; border-left: 1px solid #444; display: flex; justify-content: center; align-items: center; padding-top: 4px; border-bottom: 4px solid transparent; }
  .pg:nth-of-type(2) { margin-left: 6px; border-left-color: #888; }
  .pg.on { font-weight: 700; border-bottom-color: #2aa58c; }
  .add { width: 39px; background: #2aac94; display: flex; align-items: center; justify-content: center; padding-bottom: 2px; }
  .viz { width: 181px; border-left: 1px solid #555; display: flex; flex-direction: column; flex: none; font-size: 12px; color: #fff; }
  .data { width: 181px; border-left: 1px solid #666; flex: none; color: #fff; }
  .phd { height: 38px; display: flex; align-items: center; justify-content: space-between; padding: 0 10px 0 8px; font-size: 15px; font-weight: 700; flex: none; }
  .bv { height: 19px; line-height: 16px; padding-left: 8px; font-weight: 700; font-size: 11.500px; }
  .modes { display: flex; height: 36px; }
  .m1 { margin-left: 8px; width: 32px; height: 32px; background: #292929; border-radius: 3px; padding: 4px; }
  .m2 { margin: 4px 0 0 36px; }
  .grid { display: grid; grid-template-columns: repeat(6, 18px); align-content: start; gap: 10px; padding: 11px 0 0 11px; height: 207px; border-bottom: 1px solid #ddd; flex: none; }
  .val { padding: 9px 0 0 12px; height: 31px; font-size: 11.500px; }
  .drop { margin-left: 4px; width: 170px; height: 27px; border: 1px dashed #777; display: flex; align-items: center; padding: 1px 0 0 10px; flex: none; }
  .drop.dk { background: #000; padding-left: 8px; margin-top: 10px; }
  .dt { padding: 11px 0 0 12px; font-weight: 700; height: 36px; font-size: 11.500px; }
  .tg { display: flex; justify-content: space-between; align-items: center; padding: 0 22px 0 12px; height: 16px; font-size: 11.500px; }
  .k { margin-top: 11px; }
  .sw { width: 32px; height: 15px; border: 1px solid #aaa; border-radius: 8px; display: flex; align-items: center; justify-content: space-between; padding: 0 3px 0 4px; font-size: 8.500px; }
  .sw u { width: 8px; height: 8px; border-radius: 50%; background: #aaa; }
  .sw.on { background: #2aac94; border-color: #2aac94; color: #111; }
  .sw.on u { background: #111; }
  .ds { margin: 7px 0 0 4px; width: 172px; height: 24px; border: 1px solid #777; background: #232323; border-radius: 3px; display: flex; align-items: center; padding-left: 12px; gap: 7px; color: #b5b5b5; font-size: 12.500px; }
  .sd { display: flex; align-items: center; height: 16px; margin: 13px 0 0 16px; gap: 7px; font-size: 11.500px; }
  .sd svg + svg { margin-right: -1px; }
  .status { height: 25px; flex: none; border-top: 1px solid #777; border-bottom: 1px solid #000; display: flex; align-items: center; padding: 1px 18px 0 4px; font-size: 11.500px; justify-content: space-between; }
  .zoom { display: flex; align-items: center; }
  .zoom b { font-size: 13px; font-weight: 600; }
  .sl { width: 100px; height: 1px; background: #ccc; margin: 0 6px 0 4px; position: relative; }
  .sl i { position: absolute; left: 27px; top: -5px; width: 4px; height: 11px; background: #ddd; }
  .sl s { position: absolute; left: 50px; top: -2px; width: 1px; height: 5px; background: #ccc; }
  .zoom > .t { margin-left: 13px; }
  .zoom svg { margin: 0 1px 0 20px; }
  .task { height: 48px; flex: none; background: linear-gradient(90deg, #e2eef6 0, #e2edf7 17%, #d3e1f9 23%, #d9dcf5 32%, #d6e0f8 48%, #dadcf1 63%, #d7dff5 75%, #dfeaf5 86%, #e3eef8); display: flex; color: #222; }
  .apps { margin-left: 518px; display: flex; gap: 20px; align-items: center; }
  .apps svg:nth-child(5) { margin: 0 -1px; }
  .pbi { width: 36px; height: 40px; margin-left: -6px; background: #f0f1fa; border-radius: 4px; padding: 8px 8px 0; position: relative; }
  .pbi::after { content: ''; position: absolute; left: 11px; bottom: 0; width: 15px; height: 3px; border-radius: 2px; background: #0f78d4; }
  .tray { margin-left: auto; width: 252px; display: flex; align-items: center; }
  .tray > svg { margin-right: 10px; }
  .tray > svg:nth-child(3) { margin-right: 7px; margin-left: -1px; }
  .lang { text-align: center; line-height: 17px; font-size: 11.500px; width: 24px; margin-left: -1px; }
  .clock { margin-left: 11px; text-align: center; line-height: 16px; font-size: 11.500px; width: 62px; }
  .note { margin-left: 17px; position: relative; height: 17px; }
  .note span { position: absolute; left: 8px; top: 6px; width: 16px; height: 16px; border-radius: 50%; background: #c9cfd8; border: 1px solid #888; font-size: 11px; line-height: 14px; text-align: center; }
</style>
